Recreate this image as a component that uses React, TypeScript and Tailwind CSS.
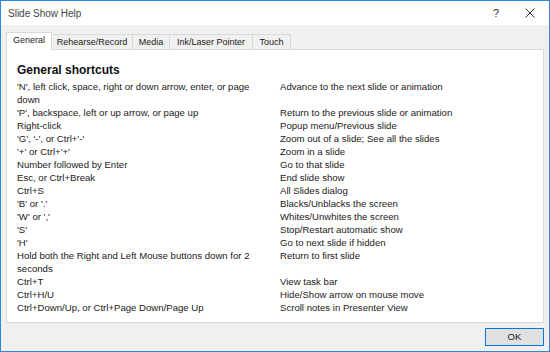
const shortcuts: [string, string][] = [
  ["'N', left click, space, right or down arrow, enter, or page down", 'Advance to the next slide or animation'],
  ["'P', backspace, left or up arrow, or page up", 'Return to the previous slide or animation'],
  ['Right-click', 'Popup menu/Previous slide'],
  ["'G', '-', or Ctrl+'-'", 'Zoom out of a slide; See all the slides'],
  ["'+' or Ctrl+'+'", 'Zoom in a slide'],
  ['Number followed by Enter', 'Go to that slide'],
  ['Esc, or Ctrl+Break', 'End slide show'],
  ['Ctrl+S', 'All Slides dialog'],
  ["'B' or '.'", 'Blacks/Unblacks the screen'],
  ["'W' or ','", 'Whites/Unwhites the screen'],
  ["'S'", 'Stop/Restart automatic show'],
  ["'H'", 'Go to next slide if hidden'],
  ['Hold both the Right and Left Mouse buttons down for 2 seconds', 'Return to first slide'],
  ['Ctrl+T', 'View task bar'],
  ['Ctrl+H/U', 'Hide/Show arrow on mouse move'],
  ['Ctrl+Down/Up, or Ctrl+Page Down/Page Up', 'Scroll notes in Presenter View'],
]

const tabs = [
  { label: 'Rehearse/Record', w: 'w-[82px]' },
  { label: 'Media', w: 'w-[38px]' },
  { label: 'Ink/Laser Pointer', w: 'w-[84px]' },
  { label: 'Touch', w: 'w-[39px]' },
]

export default function App() {
  return (
    <div
      className="flex h-[352px] w-[550px] flex-col border border-[#2b88d8] bg-[#f0f0f0] text-[#1c1a1a]"
      style={{ fontFamily: '"Liberation Sans", Arial, sans-serif' }}
    >
      {/* title bar */}
      <div className="flex h-[24px] items-center bg-white pl-[7px]">
        <span className="text-[10px] text-[#444]">Slide Show Help</span>
        <span className="ml-auto mr-[26px] text-[11px] text-[#333]">?</span>
        <svg className="mr-[14px]" width="10" height="10" viewBox="0 0 10 10">
          <path d="M0.5 0.5 L9.5 9.5 M9.5 0.5 L0.5 9.5" stroke="#333" strokeWidth="1" fill="none" />
        </svg>
      </div>

      {/* tabs */}
      <div className="-mb-px ml-[5px] mt-[7px] flex h-[18px] items-end text-[9px]">
        <div className="relative z-10 flex h-[18px] w-[46px] items-center justify-center border border-b-0 border-[#d9d9d9] bg-white pb-[1px]">
          General
        </div>
        {tabs.map(t => (
          <div
            key={t.label}
            className={`-ml-px flex h-[16px] items-center justify-center border border-b-0 border-[#d9d9d9] bg-[#f0f0f0] ${t.w}`}
          >
            {t.label}
          </div>
        ))}
      </div>

      {/* panel */}
      <div className="ml-[5px] h-[274px] w-[538px] border border-[#d9d9d9] bg-white pl-[10px] pt-[11px]">
        <h1 className="text-[12px] font-bold leading-[18px] text-[#111]">General shortcuts</h1>
        <div className="mt-[1px] grid grid-cols-[263px_1fr] text-[9.6px] leading-[13px]">
          {shortcuts.map(([key, action]) => (
            <div key={key} className="contents">
              <div className="pr-[6px]">{key}</div>
              <div>{action}</div>
            </div>
          ))}
        </div>
      </div>

      {/* footer */}
      <div className="mt-[5px] flex justify-end pr-[5px]">
        <button className="flex h-[18px] w-[59px] items-center justify-center border border-[#0078d7] bg-[#e1e1e1] text-[9.6px]">
          OK
        </button>
      </div>
    </div>
  )
}
